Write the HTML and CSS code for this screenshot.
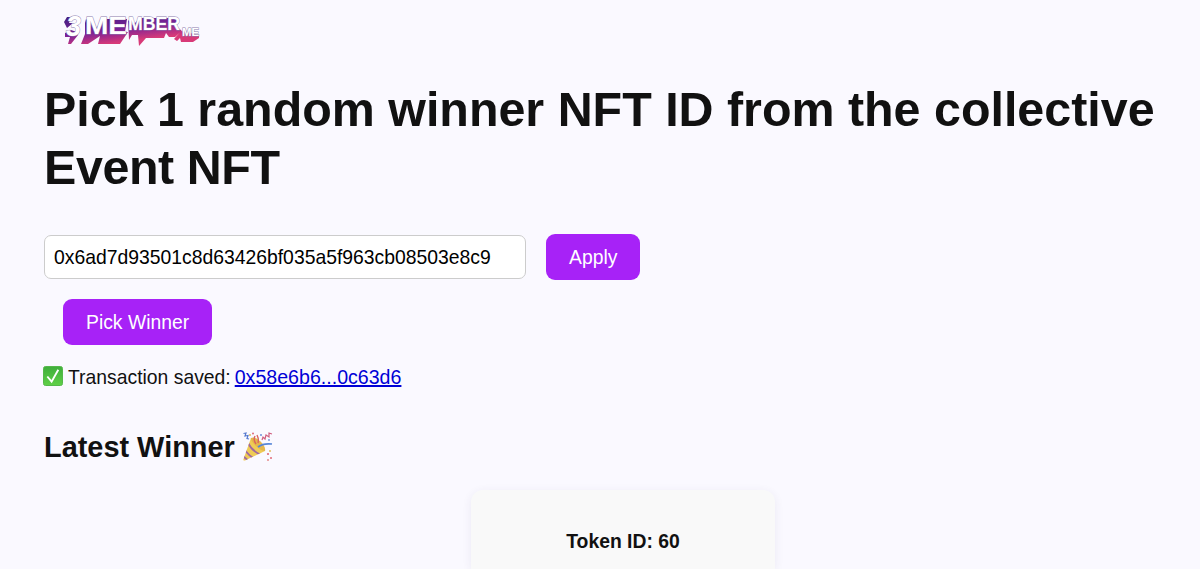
FILE: index.html
```html
<!DOCTYPE html>
<html lang="en">
<head>
    <meta charset="UTF-8">
    <meta name="viewport" content="width=device-width, initial-scale=1.0">
    <title>3member.me</title>
    <link rel="stylesheet" href="styles.css">
</head>
<body>
    <header class="header">
        <svg class="logo" width="140" height="36" viewBox="0 0 140 36">
            <defs>
                <linearGradient id="logoShade" gradientUnits="userSpaceOnUse" x1="0" y1="6" x2="4" y2="38">
                    <stop offset="0" stop-color="#43207f"/>
                    <stop offset="0.6" stop-color="#7c2297"/>
                    <stop offset="1" stop-color="#d83a78"/>
                </linearGradient>
            </defs>
            <!-- shaded sides under the letters -->
            <g fill="url(#logoShade)">
                <path d="M1 11L4 6H8L6 12L10 12L4 17ZM2 22L8 19L14 21L15 24L8 33H5L7 26L2 26Z"/>
                <path d="M22 12L23 8L33 17L42 8H64L62 21H65L57 33H35L37 25L31 29L25 33H18L22 23Z"/>
                <path d="M65 9L70 14L77 7H115L113 15L119 20L112 26H106L103 22L101 27H83L76 35L75 24H69L66 29Z"/>
                <path d="M118 20L136 24V27L130 31H118L117 27L114 30L111 28Z"/>
            </g>
            <g class="logo-text">
                <text class="logo-three" x="3" y="25" textLength="15" lengthAdjust="spacingAndGlyphs">3</text>
                <text class="logo-big" x="22" y="22.5" textLength="42" lengthAdjust="spacingAndGlyphs">ME</text>
                <text class="logo-mid" x="65" y="19" textLength="52" lengthAdjust="spacingAndGlyphs">MBER</text>
                <text class="logo-small" x="119" y="25" textLength="17" lengthAdjust="spacingAndGlyphs">ME</text>
            </g>
        </svg>
    </header>

    <main class="container">
        <h1>Pick 1 random winner NFT ID from the collective <span class="h1-end">Event NFT</span></h1>

        <div class="address-row">
            <input type="text" class="address" value="0x6ad7d93501c8d63426bf035a5f963cb08503e8c9">
            <button class="btn">Apply</button>
        </div>
        <button class="btn pick">Pick Winner</button>

        <p class="status">
            <svg class="check" width="20" height="20" viewBox="0 0 20 20">
                <defs>
                    <linearGradient id="checkFill" x1="0" y1="0" x2="0" y2="1">
                        <stop offset="0" stop-color="#3fae3b"/>
                        <stop offset="1" stop-color="#5fd047"/>
                    </linearGradient>
                </defs>
                <rect x="0.5" y="0.5" width="19" height="19" rx="2" fill="url(#checkFill)" stroke="#55b84b"/>
                <path d="M4.3 10.5L8.6 15.6L15.3 3.8" fill="none" stroke="#fff" stroke-width="1.9"/>
            </svg>
            <span class="status-text">Transaction saved:</span>
            <a href="#">0x58e6b6...0c63d6</a>
        </p>

        <h2>
            <span>Latest Winner</span>
            <svg class="party" width="31" height="31" viewBox="0 0 31 31">
                <defs>
                    <clipPath id="coneClip"><path d="M9 6L23 19L3 28.5Q1 29 1.5 27Z"/></clipPath>
                </defs>
                <path d="M9 6L23 19L3 28.5Q1 29 1.5 27Z" fill="#efcb55"/>
                <g clip-path="url(#coneClip)" fill="none" stroke="#a069a0" stroke-width="1.8">
                    <path d="M6 11Q10 19 19 23"/>
                    <path d="M3 18Q7 24 13 27"/>
                    <path d="M1 24Q4 27 7 29"/>
                </g>
                <path d="M9 6Q13 4 18.5 9.5Q24 15 23 19Q19 19 14 14Q8 8 9 6Z" fill="#e5b64b"/>
                <path d="M16 15Q21 11 30 12" fill="none" stroke="#5685d8" stroke-width="1.7"/>
                <path d="M14 12Q11 8 13 4M16 11Q17 7 15 3" fill="none" stroke="#d9655f" stroke-width="1.4"/>
                <path d="M1.5 1.5L4 1L3 4L6 3.5L5 6.5L7 7" fill="none" stroke="#5579cf" stroke-width="1.2"/>
                <path d="M20 8L21 5L23 7L24 3L27 5L27 1L30 2" fill="none" stroke="#d06080" stroke-width="1.2"/>
                <g fill="#e06b78">
                    <circle cx="11" cy="1.5" r="1"/>
                    <circle cx="26" cy="22" r="1.1"/>
                    <circle cx="29" cy="26" r="1"/>
                </g>
                <g fill="#dbb94f">
                    <circle cx="8" cy="3" r="0.9"/>
                    <circle cx="28" cy="19" r="0.9"/>
                </g>
                <g fill="#6f8fd8">
                    <circle cx="19" cy="3" r="1"/>
                    <circle cx="27" cy="8" r="0.9"/>
                </g>
                <circle cx="26" cy="28" r="1" fill="#e58b8b"/>
            </svg>
        </h2>

        <div class="winner-card">
            <strong>Token ID: 60</strong>
        </div>
    </main>
</body>
</html>
```
FILE: styles.css
```css
* {
    box-sizing: border-box;
}

body {
    margin: 0;
    background: #faf9ff;
    color: #111;
    font-family: "Liberation Sans", Arial, sans-serif;
    font-size: 19.35px;
}

.header {
    height: 48px;
    padding: 11px 0 0 63px;
}

.logo {
    display: block;
}

.logo-text {
    font-weight: bold;
    fill: #fff;
    stroke: #8a7bae;
    stroke-width: 0.8px;
    paint-order: stroke;
}

.logo-three {
    font-size: 29px;
    font-style: italic;
}

.logo-big {
    font-size: 23px;
}

.logo-mid {
    font-size: 19px;
}

.logo-small {
    font-size: 10px;
}

.container {
    padding: 32px 30px 0 44px;
}

h1 {
    margin: 0;
    font-size: 48.4px;
    line-height: 58px;
}

.h1-end {
    letter-spacing: -0.4px;
}

.address-row {
    display: flex;
    align-items: center;
    gap: 20px;
    margin-top: 38px;
}

.address {
    width: 482px;
    height: 44px;
    padding: 1px 9px 0;
    border: 1px solid #ccc;
    border-radius: 7px;
    background: #fff;
    color: #000;
    font: inherit;
}

.btn {
    height: 46px;
    padding: 1px 23px 0;
    border: none;
    border-radius: 9px;
    background: #a722f7;
    color: #fff;
    font: inherit;
    cursor: pointer;
}

.pick {
    display: block;
    margin: 19px 0 0 19px;
}

.status {
    display: flex;
    align-items: center;
    height: 24px;
    margin: 20px 0 0;
}

.check {
    margin: -2px 5px 0 -1px;
}

.status a {
    margin-left: 4px;
    color: #0000d6;
    font-size: 19.6px;
    text-decoration-thickness: 2px;
}

h2 {
    display: flex;
    align-items: center;
    gap: 7px;
    height: 36px;
    margin: 40px 0 0;
    font-size: 28.9px;
}

.winner-card {
    width: 304px;
    height: 79px;
    margin: 25px 0 0 427px;
    padding-top: 40px;
    border-radius: 12px 12px 0 0;
    background: #f9f9f9;
    box-shadow: 0 2px 10px rgba(60, 50, 120, 0.08);
    text-align: center;
}
```
